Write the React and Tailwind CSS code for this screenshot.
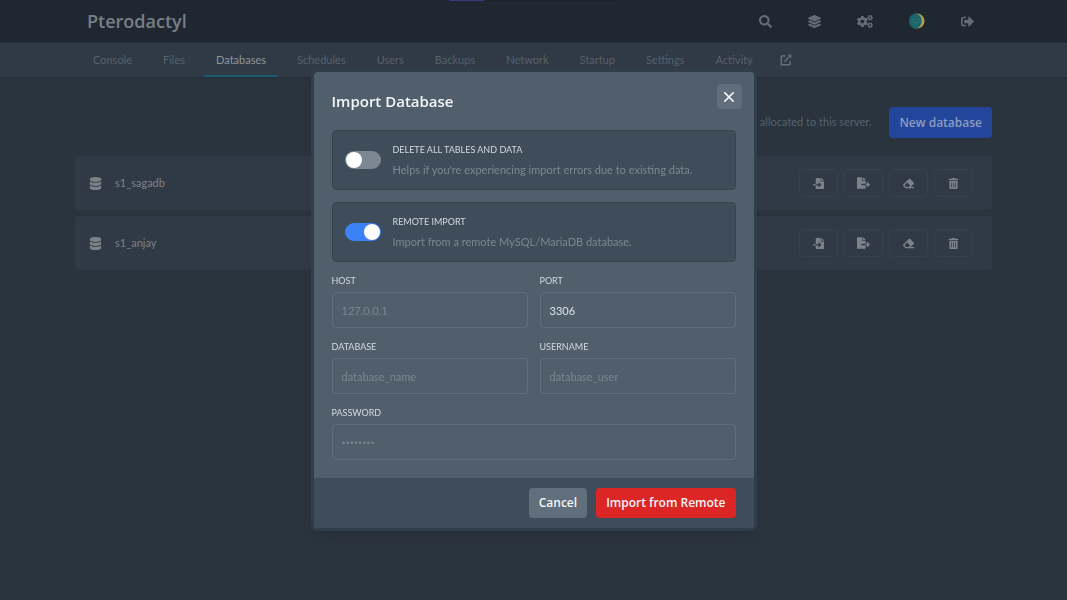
import { useState } from "react";
import {
  FaSearch,
  FaLayerGroup,
  FaCogs,
  FaSignOutAlt,
  FaDatabase,
  FaFileImport,
  FaFileExport,
  FaEraser,
  FaTrashAlt,
} from "react-icons/fa";

const TABS = [
  "Console",
  "Files",
  "Databases",
  "Schedules",
  "Users",
  "Backups",
  "Network",
  "Startup",
  "Settings",
  "Activity",
];

const DATABASES = ["s1_sagadb", "s1_anjay"];

const ROW_ACTIONS = [
  { label: "Import", icon: FaFileImport, size: "w-[11px] h-[11px]" },
  { label: "Export", icon: FaFileExport, size: "w-[13px] h-3" },
  { label: "Clear", icon: FaEraser, size: "w-[11px] h-[11px]" },
  { label: "Delete", icon: FaTrashAlt, size: "w-[11px] h-[11px]" },
];

function Avatar() {
  return (
    <svg viewBox="0 0 16 16" className="w-4 h-4">
      <circle cx="8" cy="8" r="7.6" fill="#b09d4c" />
      <path d="M8 .4a7.6 7.6 0 1 0 .2 15.15C11.2 13.6 12.6 11 12.6 7.8S11.4 2.4 8 .4z" fill="#1b656b" />
      <circle cx="4.8" cy="6.9" r=".6" fill="#3f8a8a" />
      <circle cx="9.8" cy="6.2" r=".6" fill="#3f8a8a" />
      <path d="M6.2 9c.8 1 2.3.9 3-.2" fill="none" stroke="#3f8a8a" strokeWidth=".8" />
    </svg>
  );
}

function ExternalLink() {
  return (
    <svg viewBox="0 0 12 12" className="w-3 h-3" fill="none" stroke="currentColor" strokeWidth="1.5">
      <path d="M5.5 2H1.3v8.7H10V7" strokeLinejoin="round" />
      <path d="M4.3 7.7L10 2" />
      <path d="M7.6.6h3.8v3.8z" fill="currentColor" stroke="none" />
    </svg>
  );
}

function Header() {
  const link = "flex items-center px-[18px] h-full";
  return (
    <header className="bg-[#1f2731] border-b border-[#26303b]">
      <div className="flex items-center w-full max-w-[917px] mx-auto h-[42px]">
        <a href="#" className="flex-1 pl-3 font-['Open_Sans',sans-serif] text-lg font-semibold text-[#797f86]">
          Pterodactyl
        </a>
        <nav className="flex items-center h-full text-[13px] text-[#656c74]">
          <a href="#" aria-label="Search" className={link}><FaSearch /></a>
          <a href="#" aria-label="Servers" className={link}><FaLayerGroup /></a>
          <a href="#" aria-label="Admin" className={link}><FaCogs className="w-4" /></a>
          <a href="#" aria-label="Account" className={link}><Avatar /></a>
          <a href="#" aria-label="Sign out" className={link}><FaSignOutAlt /></a>
        </nav>
      </div>
    </header>
  );
}

function SubNav() {
  return (
    <nav className="bg-[#303a46] shadow-sm">
      <div className="flex w-full max-w-[917px] mx-auto px-[6px] h-[34px] gap-[7px] text-[11px]">
        {TABS.map((tab) => (
          <a
            key={tab}
            href="#"
            className={
              tab === "Databases"
                ? "flex items-center px-3 border-b-2 border-[#1b5c6c] pt-[2px] text-[#8e959c]"
                : "flex items-center px-3 text-[#56616c]"
            }
          >
            {tab}
          </a>
        ))}
        <a href="#" aria-label="Open in admin" className="flex items-center px-2 text-[#656e77]">
          <ExternalLink />
        </a>
      </div>
    </nav>
  );
}

function DatabaseRow({ name }) {
  return (
    <li className="flex items-center h-[54px] pl-[14px] pr-[19px] rounded bg-[#303a46] text-[#7b8289]">
      <FaDatabase className="w-[13px] h-[13px]" />
      <p className="flex-1 pl-[13px] text-[11px]">{name}</p>
      <div className="flex gap-[6px]">
        {ROW_ACTIONS.map(({ label, icon: Icon, size }) => (
          <button
            key={label}
            aria-label={label}
            className="flex items-center justify-center w-[39px] h-7 rounded border border-[#36414d]"
          >
            <Icon className={size} />
          </button>
        ))}
      </div>
    </li>
  );
}

function SwitchBox({ id, label, description, checked, onChange }) {
  return (
    <div className="flex items-center gap-3 h-[60px] px-3 mb-3 rounded border border-[#384551] bg-[#3f4d5a]">
      <input
        id={id}
        type="checkbox"
        checked={checked}
        onChange={(e) => onChange(e.target.checked)}
        className="appearance-none flex items-center w-9 h-[18px] px-px shrink-0 rounded-full bg-[#7b8793] checked:bg-[#3b82f6] checked:justify-end before:block before:w-4 before:h-4 before:rounded-full before:bg-white"
      />
      <div>
        <label htmlFor={id} className="block text-[9px] leading-5 uppercase text-[#d3d9df]">
          {label}
        </label>
        <p className="text-[11px] leading-5 text-[#7a8793]">{description}</p>
      </div>
    </div>
  );
}

function Field({ id, label, className, inputFont = "", ...props }) {
  return (
    <div className={className}>
      <label htmlFor={id} className="block mb-1 text-[9px] leading-[14px] uppercase text-[#d3d9df]">
        {label}
      </label>
      <input
        id={id}
        className={`block w-full h-9 px-[9px] rounded border border-[#616e7b] bg-[#515f6c] text-[11px] text-[#dde2e7] placeholder:text-[#7a8793] focus:outline-none ${inputFont}`}
        {...props}
      />
    </div>
  );
}

function ImportDialog() {
  const [wipe, setWipe] = useState(false);
  const [remote, setRemote] = useState(true);

  return (
    <div className="fixed inset-0 flex items-center justify-center">
      <div
        role="dialog"
        aria-labelledby="import-title"
        className="w-full max-w-[440px] rounded bg-[#515f6c] ring-3 ring-[#303e4b] shadow-lg"
      >
        <div className="relative p-[18px]">
          <h2 id="import-title" className="mb-[18px] font-['Open_Sans',sans-serif] text-[15px] leading-[22px] font-semibold text-[#f3f5f7]">
            Import Database
          </h2>
          <button
            aria-label="Close"
            className="absolute top-3 right-3 flex items-center justify-center w-[25px] h-[25px] rounded bg-[#616e7b] text-white"
          >
            <svg viewBox="0 0 12 12" className="w-3 h-3" fill="none" stroke="currentColor" strokeWidth="1.6" strokeLinecap="round">
              <path d="M1.8 1.8l8.4 8.4M10.2 1.8l-8.4 8.4" />
            </svg>
          </button>

          <SwitchBox
            id="wipe"
            label="Delete all tables and data"
            description="Helps if you're experiencing import errors due to existing data."
            checked={wipe}
            onChange={setWipe}
          />
          <SwitchBox
            id="remote"
            label="Remote import"
            description="Import from a remote MySQL/MariaDB database."
            checked={remote}
            onChange={setRemote}
          />

          <form id="import-form" className="grid grid-cols-2 gap-3">
            <Field id="host" label="Host" placeholder="127.0.0.1" />
            <Field id="port" label="Port" defaultValue="3306" />
            <Field id="database" label="Database" placeholder="database_name" />
            <Field id="username" label="Username" placeholder="database_user" />
            <Field
              id="password"
              label="Password"
              type="password"
              placeholder="••••••••"
              className="col-span-2"
              inputFont="font-['Open_Sans',sans-serif]"
            />
          </form>
        </div>

        {/* Footer */}
        <div className="flex justify-end gap-[9px] px-[18px] py-[10px] rounded-b bg-[#3f4d5a] font-['Open_Sans',sans-serif] text-xs font-semibold text-[#f3f5f7]">
          <button className="h-[30px] px-[10px] rounded-sm bg-[#616e7b]">Cancel</button>
          <button className="h-[30px] px-[10px] rounded-sm bg-[#dc2626]">Import from Remote</button>
        </div>
      </div>
    </div>
  );
}

export default function App() {
  return (
    <div className="min-h-screen bg-[#2a343e] font-['Lato','Noto_Sans',sans-serif]">
      {/* Loading bar */}
      <div className="fixed top-0 inset-x-0 flex justify-center">
        <div className="w-[34px] h-px bg-[#3a3c82]" />
        <div className="w-[134px] h-px bg-[#1d2229]" />
      </div>

      <Header />
      <SubNav />

      <main className="w-full max-w-[917px] mx-auto pt-[30px]">
        <div className="flex items-center justify-end gap-[18px] mb-[18px]">
          <p className="text-[11px] text-[#56616c]">2 of 5 databases have been allocated to this server.</p>
          <button className="h-[31px] px-[10px] rounded-sm bg-[#23459a] font-['Open_Sans',sans-serif] text-xs font-semibold text-[#8d9dc4]">
            New database
          </button>
        </div>
        <ul className="flex flex-col gap-[6px]">
          {DATABASES.map((name) => (
            <DatabaseRow key={name} name={name} />
          ))}
        </ul>
      </main>

      <ImportDialog />
    </div>
  );
}
